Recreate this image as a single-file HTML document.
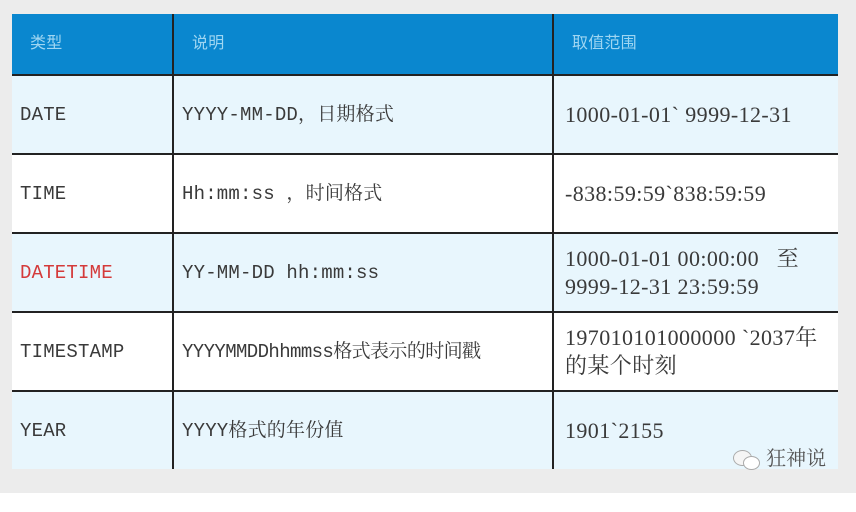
<!DOCTYPE html>
<html><head><meta charset="utf-8"><style>
body{margin:0;width:856px;height:512px;background:#fff;position:relative;overflow:hidden}
.bg{position:absolute;left:0;top:0;width:856px;height:493px;background:#ececec}
table{position:absolute;left:12px;top:14px;width:826px;border-collapse:collapse;table-layout:fixed}
td{border:2px solid #222;padding:0 0 0 8px;font-family:"Liberation Mono","Noto Serif CJK SC",monospace;font-size:19px;line-height:26px;color:#3a3a3a;letter-spacing:0.2px}
tr.h td{background:#0a87cf;height:60px;color:#9fd6f2;font-family:"Liberation Sans","Noto Sans CJK SC",sans-serif;font-size:16px;border-top:none;padding-left:18px}
td:first-child{border-left:none}
td:last-child{border-right:none}
tr.a td{background:#e8f6fd}
tr.b td{background:#fff}
tr.r td{height:77px}
td.n{font-family:"Liberation Serif","Noto Serif CJK SC",serif;font-size:22px;line-height:28px;letter-spacing:0.4px;padding-left:11px}
tr:last-child td{border-bottom:none}
</style></head><body>
<div class="bg"></div>
<table>
<colgroup><col style="width:161px"><col style="width:380px"><col></colgroup>
<tr class="h"><td>类型</td><td>说明</td><td>取值范围</td></tr>
<tr class="a r"><td>DATE</td><td>YYYY-MM-DD，日期格式</td><td class="n">1000-01-01` 9999-12-31</td></tr>
<tr class="b r"><td>TIME</td><td>Hh:mm:ss ，时间格式</td><td class="n">-838:59:59`838:59:59</td></tr>
<tr class="a r"><td style="color:#d43a3a">DATETIME</td><td>YY-MM-DD hh:mm:ss</td><td class="n">1000-01-01 00:00:00 &nbsp;&nbsp;至<br>9999-12-31 23:59:59</td></tr>
<tr class="b r"><td>TIMESTAMP</td><td style="letter-spacing:-0.6px">YYYYMMDDhhmmss格式表示的时间戳</td><td class="n">197010101000000 `2037年<br>的某个时刻</td></tr>
<tr class="a r"><td>YEAR</td><td>YYYY格式的年份值</td><td class="n">1901`2155</td></tr>
</table>
<div style="position:absolute;left:733px;top:442px;font-family:'Noto Serif CJK SC',serif;font-size:20px;color:#555">
<span style="display:inline-block;width:28px;height:20px;position:relative;vertical-align:middle">
<span style="position:absolute;left:0;top:0;width:17px;height:14px;border-radius:50%;background:#f5f5f5;border:1px solid #aaa"></span>
<span style="position:absolute;left:10px;top:6px;width:15px;height:12px;border-radius:50%;background:#fff;border:1px solid #aaa"></span>
</span> 狂神说</div>
</body></html>
